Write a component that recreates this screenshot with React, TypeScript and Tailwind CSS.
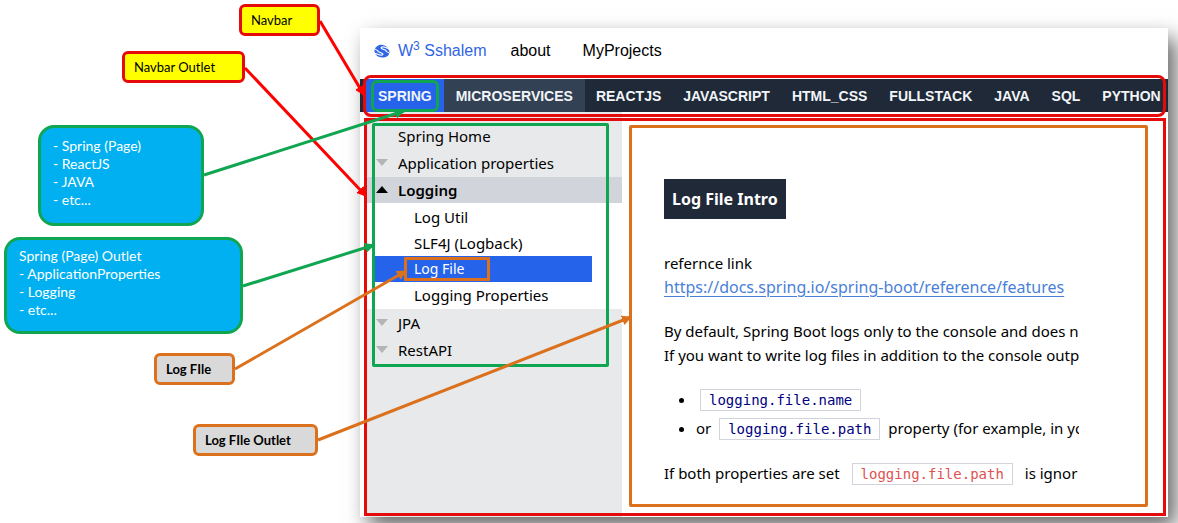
import type { ReactNode } from "react";

const topics = ["REACTJS", "JAVASCRIPT", "HTML_CSS", "FULLSTACK", "JAVA", "SQL", "PYTHON"];

function Logo() {
  return (
    <svg viewBox="0 0 32 28" className="h-3.5 w-4" fill="none" aria-hidden="true">
      <path
        d="M28 8C24 2 12 -1 7 4C3 7 1 9 1 13L1 15C2 21 8 27 17 27C24 27 31 23 31 17C31 13 30 11 26 9Z"
        fill="currentColor"
      />
      <path d="M32 10L20 6C15 5 12 8 17 10L25 13" stroke="#ffffff" strokeWidth="2.4" />
      <path d="M0 18L12 22C17 23 20 20 15 18L7 15" stroke="#ffffff" strokeWidth="2.4" />
      <path d="M0 9L9 14M32 19L23 14" stroke="#ffffff" strokeWidth="2" />
    </svg>
  );
}

function Caret({ open = false }: { open?: boolean }) {
  return (
    <svg
      viewBox="0 0 12 8"
      className={open ? "h-2 w-3 text-black" : "h-2 w-3 text-[#b5b5b5]"}
      fill="currentColor"
      aria-hidden="true"
    >
      <path d={open ? "M0 7L6 0L12 7Z" : "M0 0L12 0L6 7Z"} />
    </svg>
  );
}

function Section({ label, open, children }: { label: string; open?: boolean; children?: ReactNode }) {
  return (
    <li>
      <button
        type="button"
        aria-expanded={!!open}
        className={
          open
            ? "flex h-[26px] w-full items-center gap-2.5 bg-[#d1d5db] pl-2.5 font-semibold"
            : "flex h-[26px] w-full items-center gap-2.5 pl-2.5"
        }
      >
        <Caret open={open} />
        {label}
      </button>
      {children}
    </li>
  );
}

function Code({ children, red = false }: { children: ReactNode; red?: boolean }) {
  return (
    <code
      className={
        red
          ? "border border-[#d1d5db] px-2 py-0.5 font-['DejaVu_Sans_Mono',monospace] text-sm text-[#e05252]"
          : "border border-[#d1d5db] px-2 py-0.5 font-['DejaVu_Sans_Mono',monospace] text-sm text-[#000080]"
      }
    >
      {children}
    </code>
  );
}

function Arrows() {
  return (
    <svg
      width="1178"
      height="523"
      viewBox="0 0 1178 523"
      className="pointer-events-none absolute top-0 left-0 z-20 max-w-none"
      strokeWidth="3"
      aria-hidden="true"
    >
      <defs>
        <marker
          id="head"
          viewBox="0 0 10 10"
          refX="9"
          refY="5"
          markerWidth="10"
          markerHeight="10"
          markerUnits="userSpaceOnUse"
          orient="auto"
        >
          <path d="M0 0L10 5L0 10Z" fill="context-stroke" stroke="none" />
        </marker>
      </defs>
      <path d="M320 21L364 95" stroke="#ff0000" markerEnd="url(#head)" />
      <path d="M245 68L366 196" stroke="#ff0000" markerEnd="url(#head)" />
      <path d="M204 175L404 111" stroke="#10a651" markerEnd="url(#head)" />
      <path d="M243 286L374 245" stroke="#10a651" markerEnd="url(#head)" />
      <path d="M235 369L406 271" stroke="#db711d" markerEnd="url(#head)" />
      <path d="M318 440L631 317" stroke="#db711d" markerEnd="url(#head)" />
    </svg>
  );
}

function Notes() {
  return (
    <div className="font-[Lato,sans-serif] text-[13px] leading-[18px]">
      <div className="absolute top-1 left-[239px] flex h-8 w-[81px] items-center rounded-md border-3 border-[#e60b0b] bg-[#ffff00] px-[9px]">
        Navbar
      </div>
      <div className="absolute top-[51px] left-[122px] flex h-8 w-[123px] items-center rounded-md border-3 border-[#e60b0b] bg-[#ffff00] px-[9px]">
        Navbar Outlet
      </div>
      <ul className="absolute top-[125px] left-[38px] h-[101px] w-[166px] rounded-2xl border-3 border-[#10a651] bg-[#00b0f0] px-3 py-[9px] text-sm leading-[18px] text-white">
        <li>- Spring (Page)</li>
        <li>- ReactJS</li>
        <li>- JAVA</li>
        <li>- etc...</li>
      </ul>
      <div className="absolute top-[237px] left-1 h-[97px] w-[239px] rounded-2xl border-3 border-[#10a651] bg-[#00b0f0] px-3 py-[7px] text-sm leading-[18px] text-white">
        <p>Spring (Page) Outlet</p>
        <ul>
          <li>- ApplicationProperties</li>
          <li>- Logging</li>
          <li>- etc...</li>
        </ul>
      </div>
      <div className="absolute top-[353px] left-[154px] flex h-8 w-[81px] items-center rounded-md border-3 border-[#db711d] bg-[#d9d9d9] px-[9px] font-bold">
        Log FIle
      </div>
      <div className="absolute top-[424px] left-[193px] flex h-8 w-[125px] items-center rounded-md border-3 border-[#db711d] bg-[#d9d9d9] px-[9px] font-bold">
        Log FIle Outlet
      </div>
    </div>
  );
}

export default function App() {
  return (
    <div className="relative min-h-screen overflow-hidden bg-white pt-7 pr-2.5 pb-[5px] pl-[360px] text-black">
      <div className="bg-white font-['Noto_Sans',sans-serif] text-[15px] leading-6 shadow-[8px_10px_20px_rgba(0,0,0,0.6)]">
        <header className="flex h-[51px] items-center pb-1.5 pl-3.5 font-['Liberation_Sans',sans-serif] text-base">
          <a href="#home" className="flex items-center gap-2 text-[#2f66e3]">
            <Logo />
            <span>
              W<sup>3</sup> Sshalem
            </span>
          </a>
          <a href="#about" className="ml-6">
            about
          </a>
          <a href="#projects" className="ml-8">
            MyProjects
          </a>
        </header>

        <nav className="relative z-10 bg-[#1f2937] pl-1.5 font-['Liberation_Sans',sans-serif] text-sm font-bold text-[#f1f5f9]">
          <div className="flex h-[33px]">
            <a href="#spring" className="flex items-center bg-[#2563eb] px-3">
              SPRING
            </a>
            <a href="#microservices" className="flex items-center bg-[#334155] px-3">
              MICROSERVICES
            </a>
            {topics.map((topic) => (
              <a key={topic} href={`#${topic}`} className="flex items-center px-[11px]">
                {topic}
              </a>
            ))}
          </div>
          <div className="pointer-events-none absolute top-px left-[11px] h-8 w-[68px] rounded-md border-3 border-[#10a651]" />
          <div className="pointer-events-none absolute -top-1 right-0.5 -bottom-[5px] left-[3px] rounded-lg border-3 border-[#e60b0b]" />
        </nav>

        <div className="relative flex pl-1.5">
          <aside className="relative w-64 shrink-0 bg-[#e7e9ea] pt-[11px]">
            <ul className="space-y-px">
              <li>
                <a href="#spring-home" className="flex h-[26px] items-center pl-8">
                  Spring Home
                </a>
              </li>
              <Section label="Application properties" />
              <Section label="Logging" open>
                <ul className="bg-white py-px pr-[30px] pl-[9px]">
                  <li>
                    <a href="#log-util" className="flex h-[26px] items-center pl-[39px]">
                      Log Util
                    </a>
                  </li>
                  <li>
                    <a href="#slf4j" className="flex h-[26px] items-center pl-[39px]">
                      SLF4J (Logback)
                    </a>
                  </li>
                  <li className="relative">
                    <a
                      href="#log-file"
                      className="flex h-[26px] items-center bg-[#2563eb] pl-[39px] text-sm text-white"
                    >
                      Log File
                    </a>
                    <div className="pointer-events-none absolute inset-y-px left-[29px] w-[86px] border-3 border-[#db711d]" />
                  </li>
                  <li>
                    <a href="#logging-properties" className="flex h-[26px] items-center pl-[39px]">
                      Logging Properties
                    </a>
                  </li>
                </ul>
              </Section>
              <Section label="JPA" />
              <Section label="RestAPI" />
            </ul>
            <div className="pointer-events-none absolute top-[11px] left-1.5 h-[244px] w-[237px] rounded-xs border-3 border-[#10a651]" />
          </aside>

          <main className="relative min-w-0 flex-1 pt-[67px] pr-[89px] pb-8 pl-[42px]">
            <div className="overflow-hidden whitespace-nowrap">
              <h1 className="inline-flex h-10 items-center bg-[#1f2937] px-2 text-base font-bold text-white">
                Log File Intro
              </h1>
              <p className="mt-8">refernce link</p>
              <a
                href="https://docs.spring.io/spring-boot/reference/features"
                className="block text-base leading-6 text-[#4a7fd8] underline underline-offset-3"
              >
                https://docs.spring.io/spring-boot/reference/features
              </a>
              <p className="mt-5">By default, Spring Boot logs only to the console and does n</p>
              <p>If you want to write log files in addition to the console outp</p>
              <ul className="mt-5 list-disc space-y-[5px] pl-8">
                <li className="pl-1">
                  <Code>logging.file.name</Code>
                </li>
                <li>
                  or <span className="mr-1 ml-1"><Code>logging.file.path</Code></span> property (for example, in yo
                </li>
              </ul>
              <p className="mt-[21px]">
                If both properties are set <span className="mx-2"><Code red>logging.file.path</Code></span> is ignor
              </p>
            </div>
            <div className="pointer-events-none absolute top-[13px] right-5 bottom-2.5 left-[7px] rounded-xs border-3 border-[#db711d]" />
          </main>
          <div className="pointer-events-none absolute top-1.5 right-0.5 bottom-px left-1 border-3 border-[#e60b0b]" />
        </div>
      </div>

      <Notes />
      <Arrows />
    </div>
  );
}
